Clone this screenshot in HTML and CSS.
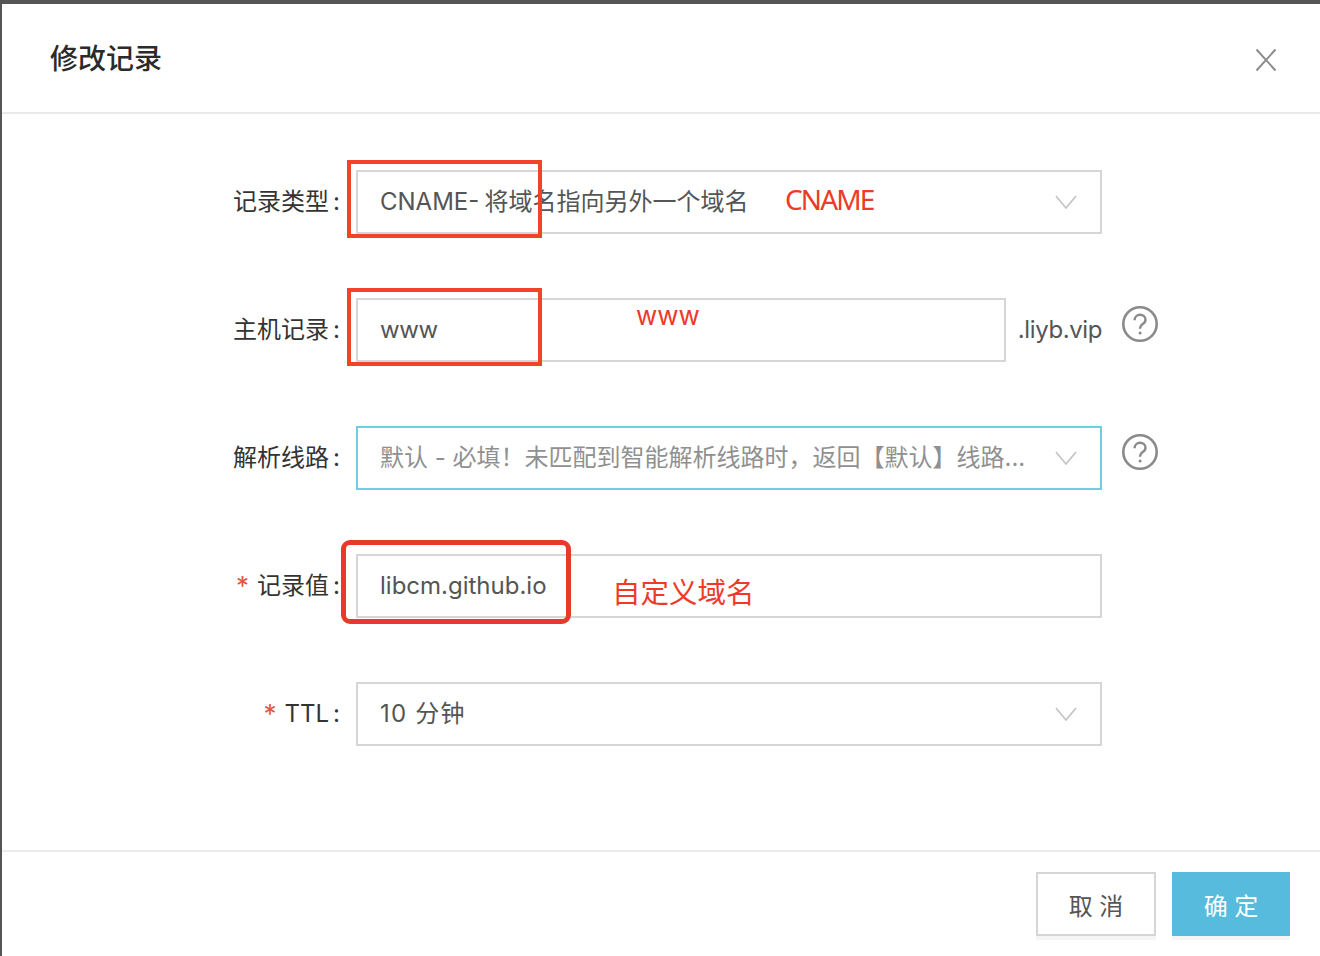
FILE: index.html
```html
<!DOCTYPE html>
<html lang="zh-CN">
<head>
<meta charset="utf-8">
<title>修改记录</title>
<link rel="stylesheet" href="styles.css">
</head>
<body>
<div class="modal">
  <header class="modal-header">
    <h1 class="modal-title">修改记录</h1>
    <svg class="close" width="22" height="24" viewBox="0 0 22 24"><path d="M1.5 1.5 20.5 22.5M20.5 1.5 1.5 22.5"/></svg>
  </header>
  <main class="form">
    <div class="row">
      <label class="label">记录类型<span class="colon">:</span></label>
      <div class="field"><span class="value tight-word">CNAME- 将域名指向另外一个域名</span><svg class="chev" width="22" height="14" viewBox="0 0 22 14"><path d="M1 1 11 13 21 1"/></svg></div>
    </div>
    <div class="row">
      <label class="label">主机记录<span class="colon">:</span></label>
      <div class="with-suffix"><div class="field"><span class="value host">www</span></div><span class="suffix">.liyb.vip</span></div>
      <svg class="help" width="36" height="36" viewBox="0 0 36 36"><circle cx="18" cy="18" r="16.7"/><path d="M12.6 14.2c0-3.200 2.500-5.400 5.500-5.400s5.400 2 5.400 4.900c0 2.100-1.100 3.200-2.800 4.300-1.700 1.100-2.600 2-2.600 4v.8"/><circle class="dot" cx="18.100" cy="27" r="1.500"/></svg>
    </div>
    <div class="row">
      <label class="label">解析线路<span class="colon">:</span></label>
      <div class="field focus"><span class="value muted">默认 - 必填！未匹配到智能解析线路时，返回【默认】线路...</span><svg class="chev" width="22" height="14" viewBox="0 0 22 14"><path d="M1 1 11 13 21 1"/></svg></div>
      <svg class="help" width="36" height="36" viewBox="0 0 36 36"><circle cx="18" cy="18" r="16.7"/><path d="M12.6 14.2c0-3.200 2.500-5.400 5.500-5.400s5.400 2 5.400 4.900c0 2.100-1.100 3.200-2.800 4.300-1.700 1.100-2.600 2-2.600 4v.8"/><circle class="dot" cx="18.100" cy="27" r="1.500"/></svg>
    </div>
    <div class="row">
      <label class="label"><span class="req">*</span>记录值<span class="colon">:</span></label>
      <div class="field"><span class="value">libcm.github.io</span></div>
    </div>
    <div class="row">
      <label class="label"><span class="req">*</span>TTL<span class="colon">:</span></label>
      <div class="field"><span class="value spaced">10 分钟</span><svg class="chev" width="22" height="14" viewBox="0 0 22 14"><path d="M1 1 11 13 21 1"/></svg></div>
    </div>
  </main>
  <footer class="modal-footer">
    <button class="btn">取 消</button>
    <button class="btn primary">确 定</button>
  </footer>
  <div class="mark mark-type"></div>
  <div class="mark mark-host"></div>
  <div class="mark mark-value"></div>
  <span class="note note-cname">CNAME</span>
  <span class="note note-www">www</span>
  <span class="note note-domain">自定义域名</span>
</div>
</body>
</html>
```
FILE: styles.css
```css
* { box-sizing: border-box; }
html, body { margin: 0; height: 956px; overflow: hidden; }
body {
  background: #555;
  padding: 4px 0 0 2px;
  font-family: Inter, "Noto Sans CJK SC", sans-serif;
  font-size: 24px;
  color: #333;
}
.modal {
  position: relative;
  height: 952px;
  background: #fff;
  display: flex;
  flex-direction: column;
}
.modal-header {
  height: 110px;
  border-bottom: 2px solid #e8eaea;
  display: flex;
  align-items: flex-start;
  justify-content: space-between;
  padding: 37px 43px 0 48px;
}
.modal-title {
  margin: 0;
  font-size: 28px;
  line-height: 36px;
  font-weight: 500;
  color: #2b2b2b;
}
.close { margin-top: 7px; }
.close path { fill: none; stroke: #8c8c8c; stroke-width: 2; }
.form {
  flex: 1;
  padding-top: 56px;
  display: flex;
  flex-direction: column;
  gap: 64px;
}
.row {
  display: grid;
  grid-template-columns: 338px 746px auto;
  column-gap: 16px;
  align-items: center;
  height: 64px;
}
.label {
  display: flex;
  justify-content: flex-end;
  align-items: center;
  line-height: 32px;
  color: #333;
  padding-bottom: 1px;
}
.colon { margin-left: 4px; }
.req { color: #e0593a; margin-right: 8px; font-size: 26px; line-height: 32px; }
.field {
  height: 64px;
  border: 2px solid #d6d6d6;
  display: flex;
  align-items: center;
  justify-content: space-between;
  padding: 0 23px 0 22px;
  background: #fff;
  flex: 1;
  min-width: 0;
}
.field.focus { border-color: #6fcfe0; }
.value { color: #555; white-space: nowrap; line-height: 32px; }
.value.muted { color: #909090; }
.value.tight-word { word-spacing: -1.500px; }
.value.host { letter-spacing: -0.400px; }
.value.spaced { letter-spacing: 1.200px; }
.chev { flex: none; }
.chev path { fill: none; stroke: #c6c6c6; stroke-width: 1.800; }
.with-suffix { display: flex; align-items: center; }
.suffix { margin-left: 12px; color: #555; line-height: 32px; padding-bottom: 1px; letter-spacing: -0.400px; }
.help { margin: 0 0 12px 4px; }
.help circle { fill: none; stroke: #8a8a8a; stroke-width: 2.600; }
.help path { fill: none; stroke: #8a8a8a; stroke-width: 2.400; }
.help .dot { fill: #8a8a8a; stroke: none; }
.modal-footer {
  height: 106px;
  border-top: 2px solid #ececec;
  display: flex;
  justify-content: flex-end;
  gap: 16px;
  padding: 20px 30px 0 0;
  flex: none;
}
.btn {
  width: 120px;
  height: 64px;
  font: inherit;
  color: #555;
  background: #fff;
  border: 2px solid #d6d6d6;
  box-shadow: 0 4px 0 #f5f5f5;
  padding: 0;
}
.btn.primary {
  width: 118px;
  color: #fff;
  background: #56bbdc;
  border-color: #56bbdc;
}
.mark { position: absolute; border: 4px solid #f0432a; pointer-events: none; }
.mark-type { left: 345px; top: 156px; width: 195px; height: 78px; }
.mark-host { left: 345px; top: 284px; width: 195px; height: 78px; }
.mark-value { left: 339px; top: 536px; width: 230px; height: 84px; border-color: #e83a2a; border-width: 5px; border-radius: 9px; }
.note { position: absolute; color: #ee3a28; white-space: nowrap; }
.note-cname { left: 783px; top: 177px; font-size: 28px; line-height: 36px; font-family: "Noto Sans", sans-serif; letter-spacing: -1.900px; }
.note-www { left: 634px; top: 296px; font-size: 26px; line-height: 32px; }
.note-domain { left: 610px; top: 570px; font-size: 28.500px; line-height: 38px; }
```
